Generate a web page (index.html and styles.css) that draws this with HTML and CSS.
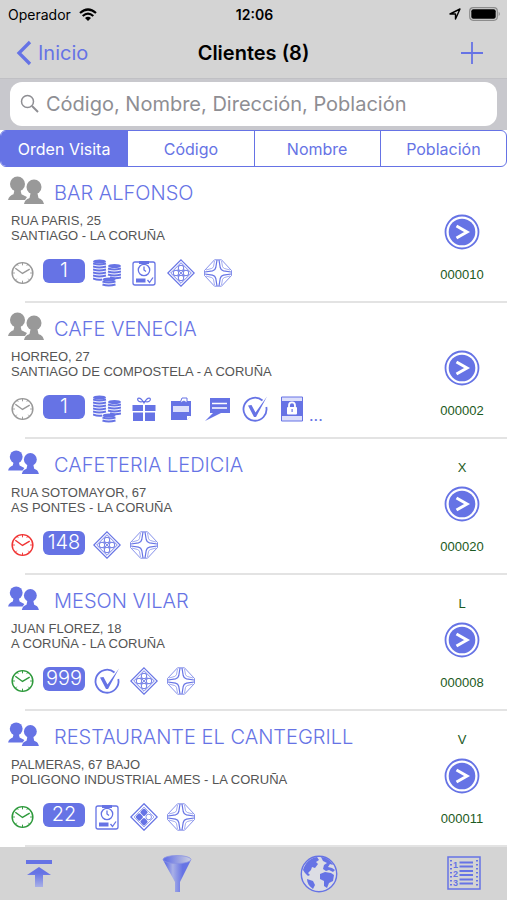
FILE: index.html
```html
<!DOCTYPE html>
<html lang="es">
<head>
    <meta charset="UTF-8">
    <meta name="viewport" content="width=device-width, initial-scale=1.0">
    <title>Clientes</title>
    <link rel="stylesheet" href="styles.css">
</head>
<body>
    <!-- Icon set -->
    <svg class="sprite" aria-hidden="true">
        <symbol id="people" viewBox="0 0 36 28">
            <circle cx="9.500" cy="8" r="7.500"/>
            <path d="M0 24c.8-3.500 3-4.800 5.500-5.800l1-4.200h6l1 4.200 5.500 2.800-2 3z"/>
            <circle cx="26" cy="11" r="8.300" fill="#fff"/>
            <path d="M16 28c1-4 3-5 5.500-6l1-4.500h7l1 4.500c2.500 1 4.500 2 5.500 6z"/>
            <circle cx="26" cy="11" r="7.500"/>
        </symbol>
        <symbol id="clock" viewBox="0 0 24 24">
            <g fill="none" stroke="currentColor">
                <circle cx="12" cy="12" r="10.800" stroke-width="1.500"/>
                <path d="M4.500 7l7.500 5.500L19.500 8" stroke-width="1.500"/>
                <path d="M12 1v3M12 20v3M1 12h3M20 12h3M4.500 19.500l1.500-1.500M19.500 19.500L18 18M6.500 2.700l1 1.700M17.500 2.700l-1 1.700" stroke-width="1"/>
            </g>
        </symbol>
        <symbol id="coins" viewBox="0 0 28 28">
            <g fill="none" stroke="currentColor" stroke-width="2">
                <path d="M0 4.500q6 2 13 0M0 7.500q6 2 13 0M0 10.500q6 2 13 0M0 13.500q6 2 13 0M0 16.500q6 2 13 0M0 19.500q5 2 9 1"/>
                <path d="M15 9.500q6 2 13 0M15 12.500q6 2 13 0M15 15.500q6 2 13 0M17 18.500q5 1.500 11 0"/>
                <path d="M9.500 22.500q6 2 13 0M9.500 25.500q6 2 13 0"/>
            </g>
            <ellipse cx="6.500" cy="2.500" rx="6.500" ry="2"/>
            <ellipse cx="21.500" cy="7" rx="6.500" ry="2"/>
            <ellipse cx="16" cy="20.500" rx="6.500" ry="2"/>
        </symbol>
        <symbol id="pad" viewBox="0 0 28 28">
            <rect x="3" y="3" width="22" height="23" rx="2" fill="none" stroke="currentColor" stroke-width="1.300"/>
            <path d="M9 2h10v3H9z"/>
            <circle cx="14" cy="11" r="5.700" fill="#fff" stroke="currentColor" stroke-width="1.300"/>
            <path d="M14 7.500V11l2 1.500M17.500 21l2 2.500 3.500-5" fill="none" stroke="currentColor" stroke-width="1.300"/>
            <path d="M6 19.500h9.500v4H6z"/>
        </symbol>
        <symbol id="diamond" viewBox="0 0 28 28">
            <g fill="none" stroke="currentColor">
                <path d="M14 .8L27.200 14 14 27.200.8 14z" stroke-width="1.200"/>
                <path d="M14 3.700L24.300 14 14 24.300 3.700 14z" stroke-width=".9"/>
                <circle cx="14" cy="9" r="2.800" stroke-width="1"/>
                <circle cx="19" cy="14" r="2.800" stroke-width="1"/>
                <circle cx="14" cy="19" r="2.800" stroke-width="1"/>
                <circle cx="9" cy="14" r="2.800" stroke-width="1"/>
                <path d="M10.500 10.500l7 7M17.500 10.500l-7 7" stroke-width=".8"/>
            </g>
        </symbol>
        <symbol id="diamond-full" viewBox="0 0 28 28">
            <path d="M14 .8L27.200 14 14 27.200.8 14z" fill="none" stroke="currentColor" stroke-width="1.300"/>
            <path d="M14 4L24 14 14 24 4 14z" fill="none" stroke="currentColor" stroke-width=".6"/>
            <rect x="-3" y="-3" width="6" height="6" rx="1.500" transform="translate(14 9.300) rotate(45)"/>
            <rect x="-3" y="-3" width="6" height="6" rx="1.500" transform="translate(9.300 14) rotate(45)"/>
            <rect x="-3" y="-3" width="6" height="6" rx="1.500" transform="translate(14 18.700) rotate(45)"/>
            <circle cx="18.700" cy="14" r="2.800" fill="none" stroke="currentColor" stroke-width=".8"/>
        </symbol>
        <symbol id="star" viewBox="0 0 28 28">
            <g fill="none" stroke="currentColor">
                <path d="M10.500 .8h7L27.500 11.500v5L17.500 27.200h-7L.5 16.500v-5z" stroke-width=".8"/>
                <path d="M13 1L11.800 8.500Q11.200 11.200 8.500 11.800L1 13M15 1l1.200 7.500q.6 2.700 3.300 3.300L27 13M13 27l-1.200-7.500q-.6-2.700-3.300-3.300L1 15M15 27l1.200-7.500q.6-2.700 3.300-3.300L27 15" stroke-width="1.200"/>
                <path d="M10.500 2L9.500 7.500Q9 9 7.500 9.500L2 11M17.500 2l1 5.500q.5 1.500 2 2L26 11M10.500 26l-1-5.500q-.5-1.500-2-2L2 17M17.500 26l1-5.500q.5-1.500 2-2L26 17" stroke-width=".6"/>
            </g>
        </symbol>
        <symbol id="gift" viewBox="0 0 28 28">
            <path d="M2.500 10h10.500v6H2.500zM15 10h10.500v6H15zM3 17.500h10V26H3zM15 17.500h10V26H15z"/>
            <path d="M14 8C10 1 6.500 3 8 5.500s4 1 6 1 4.500 1.500 6-1S18 1 14 8z" fill="none" stroke="currentColor" stroke-width="1.200"/>
        </symbol>
        <symbol id="note" viewBox="0 0 28 28">
            <path d="M4 6h20v14.500L20 25H4z"/>
            <path d="M6 11h16v6H6z" fill="#dcdffb"/>
            <path d="M20 25v-4h4" fill="#fff"/>
            <path d="M13 8l2-5h5v5l-3-2z" fill="#fff" stroke="currentColor" stroke-width="1"/>
        </symbol>
        <symbol id="chat" viewBox="0 0 28 28">
            <path d="M6 3h20v15h-9L1 26l8-8H6z"/>
            <path d="M8 8.500h15M8 13h15" stroke="#fff" stroke-width="1.500"/>
        </symbol>
        <symbol id="check" viewBox="0 0 28 28">
            <path d="M21.500 5.500A11.500 11.500 0 1 0 25.300 12" fill="none" stroke="currentColor" stroke-width="1.800"/>
            <path d="M7 10.500l3.500-.5 4 7.500L26 1.500 15 22h-2z"/>
        </symbol>
        <symbol id="lock" viewBox="0 0 28 28">
            <path d="M3.500 2h21v24h-21z" fill="#dcdffb" stroke="currentColor" stroke-width="1"/>
            <path d="M3.500 6h21v15h-21z"/>
            <path d="M11 13v-2.500a3 3.200 0 0 1 6 0V13" fill="none" stroke="#fff" stroke-width="1.800"/>
            <rect x="9" y="12" width="10" height="7.500" rx="1" fill="#fff"/>
            <path d="M13.500 14h1.200v3h-1.200z"/>
        </symbol>
        <symbol id="go" viewBox="0 0 36 36">
            <circle cx="18" cy="18" r="16.500" fill="none" stroke="currentColor" stroke-width="1.800"/>
            <circle cx="18" cy="18" r="13.300"/>
            <path d="M12.500 12l10.500 6-10.500 6" fill="none" stroke="#fff" stroke-width="3"/>
        </symbol>
    </svg>

    <header class="top-bar">
        <div class="status">
            <div class="carrier">
                <span>Operador</span>
                <svg class="wifi" viewBox="0 0 18 13" aria-hidden="true">
                    <path d="M1 5q8-7 16 0M3.700 8q5.300-4.600 10.600 0" fill="none" stroke="currentColor" stroke-width="2.200"/>
                    <path d="M6 10q3-2.500 6 0l-3 3z"/>
                </svg>
            </div>
            <span class="time">12:06</span>
            <div class="battery">
                <svg width="12" height="12" viewBox="0 0 12 12" aria-hidden="true">
                    <path d="M1 6l10-5-4.500 10V6z" fill="none" stroke="currentColor" stroke-width="1.400" stroke-linejoin="round"/>
                </svg>
                <svg width="32" height="14" viewBox="0 0 32 14" aria-hidden="true">
                    <rect x=".7" y=".7" width="27.600" height="12.600" rx="3.500" fill="none" stroke="#8c8c8c" stroke-width="1.200"/>
                    <rect x="2.300" y="2.300" width="24.400" height="9.400" rx="2"/>
                    <path d="M29.700 4.800q2.300 2.200 0 4.400z" fill="#8c8c8c"/>
                </svg>
            </div>
        </div>
        <nav class="nav">
            <a class="back" href="#">
                <svg width="16" height="26" viewBox="0 0 16 26" aria-hidden="true">
                    <path d="M14 2L3 13l11 11" fill="none" stroke="currentColor" stroke-width="3.300"/>
                </svg>
                Inicio
            </a>
            <h1>Clientes (8)</h1>
            <button class="add" type="button" aria-label="Añadir">
                <svg width="22" height="22" viewBox="0 0 22 22" aria-hidden="true">
                    <path d="M11 0v22M0 11h22" stroke="currentColor" stroke-width="1.800"/>
                </svg>
            </button>
        </nav>
    </header>

    <form class="search">
        <label class="search-box">
            <svg width="20" height="20" viewBox="0 0 20 20" aria-hidden="true">
                <circle cx="7.500" cy="7.500" r="6" fill="none" stroke="currentColor" stroke-width="1.500"/>
                <path d="M12 12l6 6" stroke="currentColor" stroke-width="2"/>
            </svg>
            <input type="text" aria-label="Buscar" placeholder="Código, Nombre, Dirección, Población">
        </label>
    </form>

    <div class="tabs">
        <button class="active" type="button">Orden Visita</button>
        <button type="button">Código</button>
        <button type="button">Nombre</button>
        <button type="button">Población</button>
    </div>

    <ul class="clients">
        <li>
            <div class="client">
                <div class="info">
                    <div class="name">
                        <svg class="people gray"><use href="#people"/></svg>
                        <h2>BAR ALFONSO</h2>
                    </div>
                    <p>RUA PARIS, 25<br>SANTIAGO - LA CORUÑA</p>
                    <div class="icons">
                        <svg class="clock gray"><use href="#clock"/></svg>
                        <span class="badge">1</span>
                        <svg><use href="#coins"/></svg>
                        <svg><use href="#pad"/></svg>
                        <svg><use href="#diamond"/></svg>
                        <svg><use href="#star"/></svg>
                    </div>
                </div>
                <div class="side">
                    <span class="day"></span>
                    <button type="button" aria-label="Ver BAR ALFONSO"><svg><use href="#go"/></svg></button>
                    <span class="code">000010</span>
                </div>
            </div>
        </li>
        <li>
            <div class="client">
                <div class="info">
                    <div class="name">
                        <svg class="people gray"><use href="#people"/></svg>
                        <h2>CAFE VENECIA</h2>
                    </div>
                    <p>HORREO, 27<br>SANTIAGO DE COMPOSTELA - A CORUÑA</p>
                    <div class="icons">
                        <svg class="clock gray"><use href="#clock"/></svg>
                        <span class="badge">1</span>
                        <svg><use href="#coins"/></svg>
                        <svg><use href="#gift"/></svg>
                        <svg><use href="#note"/></svg>
                        <svg><use href="#chat"/></svg>
                        <svg><use href="#check"/></svg>
                        <svg><use href="#lock"/></svg>
                        <span class="more">...</span>
                    </div>
                </div>
                <div class="side">
                    <span class="day"></span>
                    <button type="button" aria-label="Ver CAFE VENECIA"><svg><use href="#go"/></svg></button>
                    <span class="code">000002</span>
                </div>
            </div>
        </li>
        <li>
            <div class="client">
                <div class="info">
                    <div class="name">
                        <svg class="people"><use href="#people"/></svg>
                        <h2>CAFETERIA LEDICIA</h2>
                    </div>
                    <p>RUA SOTOMAYOR, 67<br>AS PONTES - LA CORUÑA</p>
                    <div class="icons">
                        <svg class="clock red"><use href="#clock"/></svg>
                        <span class="badge">148</span>
                        <svg><use href="#diamond"/></svg>
                        <svg><use href="#star"/></svg>
                    </div>
                </div>
                <div class="side">
                    <span class="day">X</span>
                    <button type="button" aria-label="Ver CAFETERIA LEDICIA"><svg><use href="#go"/></svg></button>
                    <span class="code">000020</span>
                </div>
            </div>
        </li>
        <li>
            <div class="client">
                <div class="info">
                    <div class="name">
                        <svg class="people"><use href="#people"/></svg>
                        <h2>MESON VILAR</h2>
                    </div>
                    <p>JUAN FLOREZ, 18<br>A CORUÑA - LA CORUÑA</p>
                    <div class="icons">
                        <svg class="clock green"><use href="#clock"/></svg>
                        <span class="badge">999</span>
                        <svg><use href="#check"/></svg>
                        <svg><use href="#diamond"/></svg>
                        <svg><use href="#star"/></svg>
                    </div>
                </div>
                <div class="side">
                    <span class="day">L</span>
                    <button type="button" aria-label="Ver MESON VILAR"><svg><use href="#go"/></svg></button>
                    <span class="code">000008</span>
                </div>
            </div>
        </li>
        <li>
            <div class="client">
                <div class="info">
                    <div class="name">
                        <svg class="people"><use href="#people"/></svg>
                        <h2>RESTAURANTE EL CANTEGRILL</h2>
                    </div>
                    <p>PALMERAS, 67 BAJO<br>POLIGONO INDUSTRIAL AMES - LA CORUÑA</p>
                    <div class="icons">
                        <svg class="clock green"><use href="#clock"/></svg>
                        <span class="badge">22</span>
                        <svg><use href="#pad"/></svg>
                        <svg><use href="#diamond-full"/></svg>
                        <svg><use href="#star"/></svg>
                    </div>
                </div>
                <div class="side">
                    <span class="day">V</span>
                    <button type="button" aria-label="Ver RESTAURANTE EL CANTEGRILL"><svg><use href="#go"/></svg></button>
                    <span class="code">000011</span>
                </div>
            </div>
        </li>
    </ul>

    <footer class="toolbar">
        <button type="button" aria-label="Subir">
            <svg width="28" height="38" viewBox="0 0 28 38">
                <defs>
                    <linearGradient id="fade" x1="0" y1="0" x2="0" y2="1">
                        <stop offset="0.3" stop-color="#6673e5"/>
                        <stop offset="1" stop-color="#a9b0e6"/>
                    </linearGradient>
                </defs>
                <path d="M1 5h26v4H1z"/>
                <path d="M14 12l12 8h-8v12h-8V20H2z" fill="url(#fade)"/>
            </svg>
        </button>
        <button type="button" aria-label="Filtrar">
            <svg width="30" height="38" viewBox="0 0 30 38">
                <defs>
                    <linearGradient id="cone" x1="0" y1="0" x2="1" y2="0">
                        <stop offset="0.1" stop-color="#6673e5"/>
                        <stop offset="0.35" stop-color="#a9b0e6"/>
                        <stop offset="0.7" stop-color="#6673e5"/>
                    </linearGradient>
                    <linearGradient id="rim" x1="0" y1="0" x2="1" y2="0">
                        <stop offset="0.1" stop-color="#6673e5"/>
                        <stop offset="1" stop-color="#cdd0e0"/>
                    </linearGradient>
                </defs>
                <path d="M1 5l12 22v10h5V27L29 5z" fill="url(#cone)"/>
                <ellipse cx="15" cy="4.500" rx="14" ry="4" fill="url(#rim)" stroke="#8a93e3" stroke-width=".8"/>
            </svg>
        </button>
        <button type="button" aria-label="Mapa">
            <svg width="38" height="38" viewBox="0 0 38 38">
                <circle cx="19" cy="19" r="17.700" fill="#dcdde4" stroke="currentColor" stroke-width="1.400"/>
                <path d="M3 15C5 8 10 3 17 2l2 3-3 2 2 2-3 4-3-1-1 3-3 3 2 2-2 1-3-3zM21 2c5 0 10 4 12 8l-3-1-2 3 4 1 3 2-2 2-4-2-3 1-3-2 1-4 3-2-4-2zM20 19l5-2 6 1 3 2-1 6-4 2-2 5-3-2 0-5-4-2zM7 24l6 2 2 4-2 4c-4-3-6-6-6-10z"/>
            </svg>
        </button>
        <button type="button" aria-label="Lista">
            <svg width="34" height="38" viewBox="0 0 34 38">
                <rect x="1" y="2" width="32" height="32" fill="none" stroke="currentColor" stroke-width="1.500"/>
                <path d="M12.500 7.500h13.500M12.500 11.500h13.500M12.500 16h13.500M12.500 20h13.500M12.500 24.500h13.500M12.500 28.500h13.500" stroke="currentColor" stroke-width="2"/>
                <path d="M4 5v27M30 5v27" stroke="currentColor" stroke-width="2" stroke-dasharray="1.500 2.500"/>
                <text x="6" y="12.500">1</text>
                <text x="6" y="21.500">2</text>
                <text x="6" y="30.500">3</text>
            </svg>
        </button>
    </footer>
</body>
</html>
```
FILE: styles.css
```css
* {
    box-sizing: border-box;
}
body {
    font-family: Inter, "Liberation Sans", sans-serif;
    margin: 0;
    min-height: 100vh;
    display: flex;
    flex-direction: column;
    background-color: #fff;
    color: #000;
}
svg {
    fill: currentColor;
    display: block;
}
button {
    font-family: inherit;
    color: #6673e5;
    background: none;
    border: none;
    padding: 0;
    cursor: pointer;
}
h1, h2, p, ul {
    margin: 0;
    padding: 0;
}
.sprite {
    position: absolute;
    width: 0;
    height: 0;
}

/* Header */
.top-bar {
    background-color: #d4d4d4;
    border-bottom: 1px solid #c0c0c4;
}
.status, .nav {
    display: grid;
    grid-template-columns: 1fr auto 1fr;
    align-items: center;
}
.status {
    height: 28px;
    padding: 0 6px 0 8px;
    font-size: 14px;
}
.carrier, .battery {
    display: flex;
    align-items: center;
    gap: 8px;
}
.battery {
    justify-content: flex-end;
}
.wifi {
    width: 18px;
    height: 13px;
}
.time {
    font-weight: 600;
}
.nav {
    height: 50px;
    padding: 0 16px;
}
.back {
    display: flex;
    align-items: center;
    gap: 6px;
    font-size: 20px;
    color: #6673e5;
    text-decoration: none;
}
.nav h1 {
    font-size: 20px;
    font-weight: 600;
}
.add {
    justify-self: end;
    padding-right: 8px;
}

/* Search */
.search {
    background-color: #c8c8cd;
    padding: 3px 10px 4px;
}
.search-box {
    display: flex;
    align-items: center;
    gap: 6px;
    height: 44px;
    padding: 0 10px;
    border-radius: 12px;
    background-color: #fff;
    color: #8e8e93;
}
.search-box input {
    flex: 1;
    min-width: 0;
    border: none;
    padding: 0;
    outline: none;
    background: none;
    font-family: inherit;
    font-size: 20px;
}
.search-box input::placeholder {
    color: #8e8e93;
}

/* Sort tabs */
.tabs {
    display: grid;
    grid-template-columns: repeat(4, 1fr);
    height: 37px;
    border: 1px solid #6673e5;
    border-radius: 6px;
    overflow: hidden;
}
.tabs button {
    font-size: 16px;
}
.tabs button + button {
    border-left: 1px solid #6673e5;
}
.tabs .active {
    background-color: #6673e5;
    color: #fff;
}

/* Client list */
.clients {
    flex: 1;
    list-style: none;
}
.clients li::after {
    content: "";
    display: block;
    height: 2px;
    margin-left: 25px;
    background-color: #e3e3e3;
}
.client {
    display: grid;
    grid-template-columns: 1fr 90px;
    height: 134px;
    color: #6673e5;
}
.name {
    display: grid;
    grid-template-columns: 46px 1fr;
    align-items: center;
    height: 46px;
    padding-left: 8px;
}
.name h2 {
    font-size: 20px;
    font-weight: 300;
    line-height: 24px;
    padding-top: 6px;
}
.people {
    width: 31px;
    height: 24px;
}
.people.gray {
    width: 36px;
    height: 28px;
}
.info p {
    padding-left: 11px;
    font-family: "Liberation Sans", Arial, sans-serif;
    font-size: 13px;
    line-height: 15px;
    color: #555;
}
.icons {
    display: flex;
    align-items: center;
    gap: 9px;
    padding: 16px 0 0 11px;
}
.icons svg {
    width: 28px;
    height: 28px;
}
.icons .clock {
    width: 23px;
    height: 24px;
}
.gray {
    color: #999;
}
.red {
    color: #f03535;
}
.green {
    color: #2e9a3c;
}
.badge {
    width: 42px;
    height: 24px;
    margin: 0 -1px 4px 0;
    border-radius: 6px;
    background-color: #6673e5;
    color: #fff;
    font-size: 20px;
    font-weight: 300;
    line-height: 22px;
    text-align: center;
}
.more {
    align-self: flex-end;
    margin-left: -6px;
    font-size: 16px;
    line-height: 16px;
}
.side {
    display: flex;
    flex-direction: column;
    align-items: center;
    font-family: "Liberation Sans", Arial, sans-serif;
    font-size: 13px;
    line-height: 16px;
    color: #1c5a22;
}
.day {
    height: 26px;
    margin-top: 21px;
}
.side svg {
    width: 36px;
    height: 36px;
}
.code {
    margin-top: 17px;
}

/* Bottom toolbar */
.toolbar {
    display: flex;
    justify-content: space-between;
    align-items: center;
    height: 54px;
    padding: 0 26px 0 25px;
    background-color: #d4d4d4;
}
.toolbar text {
    font-family: "Liberation Sans", Arial, sans-serif;
    font-size: 9px;
    font-weight: bold;
}
```
